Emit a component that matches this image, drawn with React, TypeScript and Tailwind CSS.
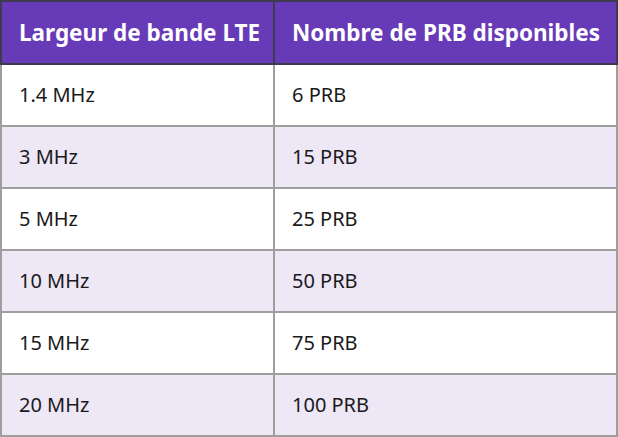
const rows: [string, string][] = [
  ['1.4 MHz', '6 PRB'],
  ['3 MHz', '15 PRB'],
  ['5 MHz', '25 PRB'],
  ['10 MHz', '50 PRB'],
  ['15 MHz', '75 PRB'],
  ['20 MHz', '100 PRB'],
]

export default function App() {
  return (
    <div className="h-[437px] w-[618px] bg-white font-['Noto_Sans',sans-serif]">
      <table className="w-[618px] table-fixed border-collapse">
        <thead>
          <tr className="h-[63px]">
            <th className="w-[273px] whitespace-nowrap border-2 border-[#3f3a4f] bg-[#673ab7] px-[17px] text-left text-[22.5px] font-bold text-white">
              Largeur de bande LTE
            </th>
            <th className="whitespace-nowrap border-2 border-[#3f3a4f] bg-[#673ab7] px-[17px] text-left text-[22.5px] font-bold text-white">
              Nombre de PRB disponibles
            </th>
          </tr>
        </thead>
        <tbody>
          {rows.map(([bw, prb], i) => (
            <tr key={bw} className={`h-[62px] ${i % 2 === 1 ? 'bg-[#ede7f6]' : 'bg-white'}`}>
              <td className="border-2 border-[#9e9e9e] px-[17px] text-[20px] text-[#1a1a1a]">{bw}</td>
              <td className="border-2 border-[#9e9e9e] px-[17px] text-[20px] text-[#1a1a1a]">{prb}</td>
            </tr>
          ))}
        </tbody>
      </table>
    </div>
  )
}
